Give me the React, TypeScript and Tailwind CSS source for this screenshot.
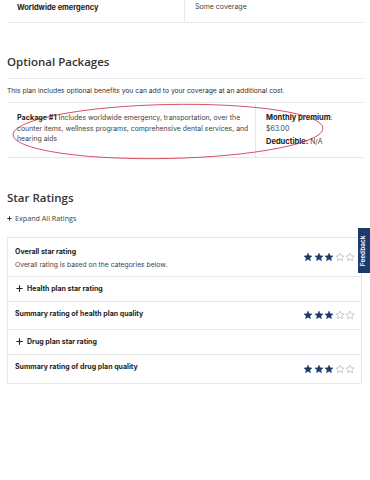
import React from "react";

const Star = ({ filled }: { filled: boolean }) => (
  <svg width="10" height="10" viewBox="0 0 24 24" className="block">
    <path
      d="M12 2.5l2.9 6.3 6.9.7-5.2 4.6 1.5 6.8L12 17.4l-6.1 3.5 1.5-6.8L2.2 9.5l6.9-.7z"
      fill={filled ? "#1e3a6d" : "none"}
      stroke={filled ? "#1e3a6d" : "#9ca3af"}
      strokeWidth={filled ? 1 : 1.3}
      strokeLinejoin="round"
    />
  </svg>
);

const Stars = ({ n }: { n: number }) => (
  <div className="flex gap-[0.5px]">
    {[0, 1, 2, 3, 4].map((i) => (
      <Star key={i} filled={i < n} />
    ))}
  </div>
);

const Plus = ({ size, w }: { size: number; w: number }) => (
  <svg width={size} height={size} viewBox="0 0 10 10" className="block shrink-0">
    <path d="M5 0.5v9M0.5 5h9" stroke="#222" strokeWidth={w} />
  </svg>
);

export default function App() {
  const body = { fontFamily: "Inter, 'Noto Sans', sans-serif" };
  const head = { fontFamily: "'Open Sans', 'Noto Sans', sans-serif" };
  return (
    <div className="relative w-[370px] h-[480px] bg-white overflow-hidden text-[#333]" style={body}>
      {/* top row */}
      <div className="mx-[7px] flex border-b border-[#e5e7eb] h-[23px]">
        <div className="w-[178px] pl-[10px] pt-[1.5px] text-[7.4px] font-bold text-[#222] border-r border-[#e5e7eb]">
          Worldwide emergency
        </div>
        <div className="pl-[10px] pt-[1.5px] text-[7px] text-[#444]">Some coverage</div>
      </div>

      {/* Optional Packages */}
      <div className="mx-[7px] mt-[32px]">
        <h2 className="text-[11.5px] font-semibold text-[#333] leading-[14px] pb-[9px] border-b border-[#e5e7eb]" style={head}>
          Optional Packages
        </h2>
        <p className="text-[6.75px] text-[#333] mt-[7px] leading-[10px]">
          This plan includes optional benefits you can add to your coverage at an additional cost.
        </p>
        <div className="relative mt-[6px] flex border-t border-b border-[#e5e7eb] h-[56px]">
          <div className="w-[249px] pl-[10px] pr-[6px] pt-[10px] text-[6.9px] leading-[10.5px] text-[#444] border-r border-[#e5e7eb]">
            <span className="font-bold text-[#222] text-[7.2px]">Package #1</span> Includes worldwide emergency, transportation, over the counter items, wellness programs, comprehensive dental services, and hearing aids
          </div>
          <div className="pl-[10px] pt-[10px] text-[6.9px] leading-[10.5px] text-[#444]">
            <div>
              <span className="font-bold text-[#222] text-[7.5px]">Monthly premium</span>:
            </div>
            <div>$63.00</div>
            <div className="mt-[3px]">
              <span className="font-bold text-[#222] text-[7.5px]">Deductible:</span> N/A
            </div>
          </div>
          <svg className="absolute left-[-2px] top-[-5px] pointer-events-none" width="320" height="66" viewBox="0 0 320 66">
            <ellipse cx="163" cy="33.5" rx="155" ry="27" fill="none" stroke="#c8283f" strokeWidth="0.8" transform="rotate(-1.2 163 33.5)" />
          </svg>
        </div>
      </div>

      {/* Star Ratings */}
      <div className="mx-[7px] mt-[33px]">
        <h2 className="text-[11.5px] font-semibold text-[#333] leading-[14px]" style={head}>
          Star Ratings
        </h2>
        <div className="mt-[8px] flex items-center gap-[3px] text-[7.2px] text-[#444]" style={head}>
          <Plus size={5} w={1.8} />
          <span>Expand All Ratings</span>
        </div>
        <div className="mt-[13px] mr-[1px] border border-[#e5e7eb]">
          <div className="flex items-center justify-between border-b border-[#e5e7eb] h-[39px] pl-[7px] pr-[6px]">
            <div className="pt-[2px]">
              <div className="text-[7px] font-bold text-[#222] leading-[9px]">Overall star rating</div>
              <div className="text-[6.8px] text-[#444] leading-[9px] mt-[4px]">Overall rating is based on the categories below.</div>
            </div>
            <Stars n={3} />
          </div>
          <div className="flex items-center gap-[4px] border-b border-[#e5e7eb] h-[25px] pl-[8px]">
            <Plus size={7} w={1.6} />
            <span className="text-[7px] font-bold text-[#222]">Health plan star rating</span>
          </div>
          <div className="flex items-center justify-between border-b border-[#e5e7eb] h-[28px] pl-[7px] pr-[6px]">
            <div className="text-[7px] font-bold text-[#222] -mt-[3px]">Summary rating of health plan quality</div>
            <Stars n={3} />
          </div>
          <div className="flex items-center gap-[4px] border-b border-[#e5e7eb] h-[25px] pl-[8px]">
            <Plus size={7} w={1.6} />
            <span className="text-[7px] font-bold text-[#222]">Drug plan star rating</span>
          </div>
          <div className="flex items-center justify-between h-[28px] pl-[7px] pr-[6px]">
            <div className="text-[7px] font-bold text-[#222] -mt-[3px]">Summary rating of drug plan quality</div>
            <Stars n={3} />
          </div>
        </div>
      </div>

      {/* Feedback tab */}
      <div className="absolute left-[358px] top-[228px] w-[12px] h-[45px] bg-[#1e3a6d] flex items-center justify-center">
        <span className="text-white text-[6.5px] font-semibold -rotate-90 whitespace-nowrap" style={body}>
          Feedback
        </span>
      </div>
    </div>
  );
}
